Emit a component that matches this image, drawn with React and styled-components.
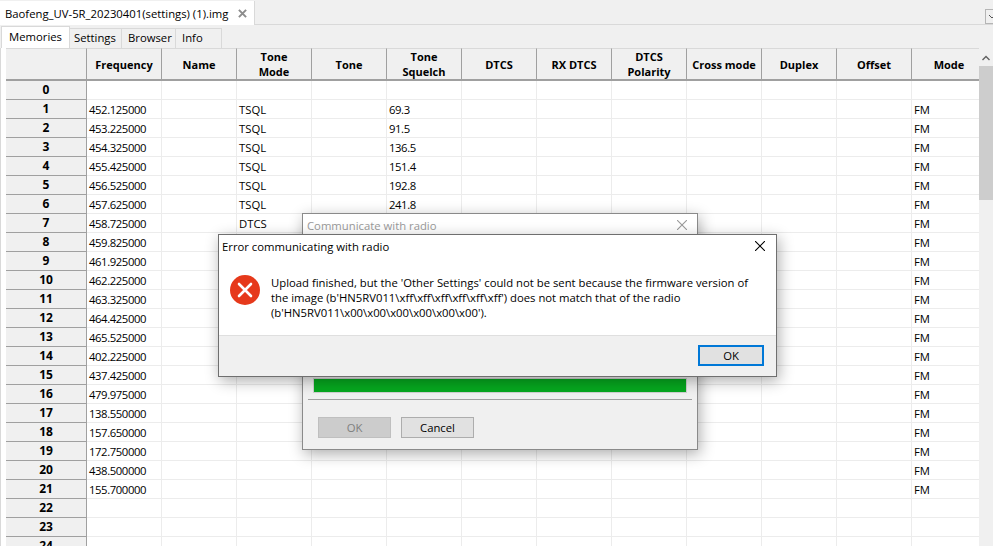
import React from 'react'
import styled, { createGlobalStyle } from 'styled-components'

const GlobalStyle = createGlobalStyle`
  html, body {
    margin: 0;
    padding: 0;
    width: 993px;
    height: 546px;
    overflow: hidden;
    background: #f0f0f0;
    font-family: "Open Sans", "Noto Sans", sans-serif;
    font-size: 11.3px;
    color: #000;
  }
`

const Page = styled.div`
  position: relative;
  width: 993px;
  height: 546px;
  overflow: hidden;
  background: #f0f0f0;
`
const DocBar = styled.div`
  display: flex;
  justify-content: space-between;
  height: 23px;
  padding-top: 1px;
  border-bottom: 1px solid #d9d9d9;
  box-sizing: content-box;
`
const DocTab = styled.div`
  display: flex;
  align-items: center;
  justify-content: space-between;
  width: 255px;
  height: 24px;
  box-sizing: border-box;
  padding: 0 7px 0 5px;
  white-space: nowrap;
  background: #fff;
  border-right: 1px solid #d9d9d9;
  z-index: 1;
`
const CloseTab = styled.svg`
  width: 9px;
  height: 9px;
  stroke: #8c8c8c;
  stroke-width: 2.2;
`
const ScrollTabs = styled.div`
  width: 7px;
  height: 13px;
  margin-top: 8px;
  border: 1px solid #b5b5b5;
  border-right: none;
  background: #f0f0f0;
  overflow: hidden;
`
const TabChevron = styled.svg`
  display: block;
  width: 7px;
  height: 13px;
  fill: none;
  stroke: #555;
`
const TabRow = styled.div`
  display: flex;
  height: 23px;
  padding: 1px 0 0 1px;
  box-sizing: border-box;
`
const Tab = styled.div`
  height: ${p => (p.$active ? '22px' : '20px')};
  margin-top: ${p => (p.$active ? '0' : '2px')};
  width: ${p => p.$w}px;
  box-sizing: border-box;
  padding-left: ${p => p.$pad}px;
  line-height: ${p => (p.$active ? '19px' : '18px')};
  background: ${p => (p.$active ? '#fff' : '#f0f0f0')};
  border: 1px solid #d9d9d9;
  border-left: ${p => (p.$active ? '1px solid #d9d9d9' : 'none')};
  border-bottom: none;
`
const Body = styled.div`
  display: flex;
  height: 500px;
  background: #fff;
  padding-left: 5px;
  border-left: 1px solid #d9d9d9;
  box-sizing: border-box;
`
const Grid = styled.div`
  width: 973px;
  flex: none;
  overflow: hidden;
`
const Row = styled.div`
  display: flex;
  height: ${p => p.$h || 19}px;
  box-sizing: border-box;
`
const Corner = styled.div`
  width: 81px;
  flex: none;
  box-sizing: border-box;
  background: #f0f0f0;
  border-right: 1px solid #a0a0a0;
  border-bottom: 2px solid #a0a0a0;
  border-top: 1px solid #d9d9d9;
`
const HeadCell = styled.div`
  width: 75px;
  flex: none;
  box-sizing: border-box;
  display: flex;
  align-items: center;
  justify-content: center;
  text-align: center;
  font-size: 11px;
  font-weight: 700;
  line-height: 15px;
  white-space: pre-line;
  background: #f0f0f0;
  border-right: 1px solid #a0a0a0;
  border-bottom: 2px solid #a0a0a0;
  border-top: 1px solid #d9d9d9;
`
const RowHead = styled.div`
  width: 81px;
  flex: none;
  box-sizing: border-box;
  background: #f0f0f0;
  border-right: 1px solid #a0a0a0;
  border-bottom: 1px solid #a0a0a0;
  text-align: center;
  font-size: 12px;
  font-weight: 700;
  line-height: 17px;
`
const Cell = styled.div`
  width: 75px;
  flex: none;
  box-sizing: border-box;
  padding-left: 2px;
  line-height: 19px;
  white-space: nowrap;
  letter-spacing: ${p => (p.$numeric ? '-0.4px' : '0')};
  background: #fff;
  border-right: 1px solid #ececec;
  border-bottom: 1px solid #ececec;
`
const ScrollBar = styled.div`
  width: 14px;
  flex: none;
  background: #f0f0f0;
  display: flex;
  flex-direction: column;
  align-items: center;
`
const ScrollArrow = styled.svg`
  width: 14px;
  height: 18px;
  flex: none;
  fill: none;
  stroke: #606060;
  stroke-width: 1.4;
`
const ScrollThumb = styled.div`
  width: 14px;
  height: 134px;
  background: #cdcdcd;
`
const Window = styled.div`
  position: absolute;
  left: ${p => p.$x}px;
  top: ${p => p.$y}px;
  width: ${p => p.$w}px;
  height: ${p => p.$h}px;
  box-sizing: border-box;
  background: ${p => p.$bg};
  border: 1px solid ${p => p.$line};
  box-shadow: 2px 4px 14px rgba(0, 0, 0, 0.32);
  display: flex;
  flex-direction: column;
`
const TitleBar = styled.div`
  display: flex;
  align-items: center;
  justify-content: space-between;
  height: 24px;
  flex: none;
  box-sizing: border-box;
  padding: 0 ${p => p.$right}px 2px ${p => p.$left}px;
  color: ${p => p.$color};
  background: #fff;
`
const CloseIcon = styled.svg`
  width: 10px;
  height: 10px;
  stroke: ${p => p.$color};
  stroke-width: 1.1;
`
const Message = styled.div`
  display: flex;
  height: 77px;
  flex: none;
  background: #fff;
  padding: 16px 0 0 11px;
  box-sizing: border-box;
  gap: 11px;
  border-bottom: 1px solid #dfdfdf;
`
const ErrorIcon = styled.svg`
  width: 30px;
  height: 30px;
  flex: none;
`
const MessageText = styled.div`
  width: 490px;
  line-height: 15px;
  white-space: nowrap;
  color: #000;
`
const Footer = styled.div`
  flex: 1;
  display: flex;
  justify-content: flex-end;
  align-items: flex-start;
  padding: 9px 12px 0 0;
`
const Button = styled.div`
  width: ${p => p.$w}px;
  height: 21px;
  box-sizing: border-box;
  display: flex;
  align-items: center;
  justify-content: center;
  background: ${p => (p.$disabled ? '#cccccc' : '#e1e1e1')};
  color: ${p => (p.$disabled ? '#7f7f7f' : '#000')};
  border: ${p => (p.$primary ? '2px solid #0078d7' : p.$disabled ? '1px solid #bfbfbf' : '1px solid #adadad')};
`
const Progress = styled.div`
  height: 15px;
  margin: 0 10px;
  background: #06a81f;
  border: 1px solid #d0d0d0;
  box-sizing: border-box;
`
const Divider = styled.div`
  height: 1px;
  margin: 6px 5px 0;
  background: #a0a0a0;
`
const DialogSpacer = styled.div`
  height: 140px;
  flex: none;
`
const ButtonRow = styled.div`
  display: flex;
  gap: 10px;
  padding: 17px 0 0 15px;
`

const COLUMNS = [
  'Frequency', 'Name', 'Tone\nMode', 'Tone', 'Tone\nSquelch', 'DTCS', 'RX DTCS',
  'DTCS\nPolarity', 'Cross mode', 'Duplex', 'Offset', 'Mode',
]

const FREQS = [
  '', '452.125000', '453.225000', '454.325000', '455.425000', '456.525000', '457.625000', '458.725000',
  '459.825000', '461.925000', '462.225000', '463.325000', '464.425000', '465.525000', '402.225000',
  '437.425000', '479.975000', '138.550000', '157.650000', '172.750000', '438.500000', '155.700000',
  '', '', '',
]

const TONES = { 1: '69.3', 2: '91.5', 3: '136.5', 4: '151.4', 5: '192.8', 6: '241.8' }

export default function App() {
  return (
    <Page>
      <GlobalStyle />
      <DocBar>
        <DocTab>
          Baofeng_UV-5R_20230401(settings) (1).img
          <CloseTab viewBox="0 0 10 10"><path d="M1 1l8 8M9 1l-8 8" /></CloseTab>
        </DocTab>
        <ScrollTabs>
          <TabChevron viewBox="0 0 7 13"><path d="M3 5l3 3 3-3" /></TabChevron>
        </ScrollTabs>
      </DocBar>
      <TabRow>
        <Tab $active $w={69} $pad={7}>Memories</Tab>
        <Tab $w={52} $pad={4}>Settings</Tab>
        <Tab $w={54} $pad={6}>Browser</Tab>
        <Tab $w={46} $pad={6}>Info</Tab>
      </TabRow>
      <Body>
        <Grid>
          <Row $h={33}>
            <Corner />
            {COLUMNS.map(name => <HeadCell key={name}>{name}</HeadCell>)}
          </Row>
          {FREQS.map((freq, i) => (
            <Row key={i}>
              <RowHead>{i}</RowHead>
              <Cell $numeric>{freq}</Cell>
              <Cell />
              <Cell>{i >= 1 && i <= 6 ? 'TSQL' : i === 7 ? 'DTCS' : ''}</Cell>
              <Cell />
              <Cell $numeric>{TONES[i]}</Cell>
              <Cell /><Cell /><Cell /><Cell /><Cell /><Cell />
              <Cell>{i >= 1 && i <= 21 ? 'FM' : ''}</Cell>
            </Row>
          ))}
        </Grid>
        <ScrollBar>
          <ScrollArrow viewBox="0 0 14 18"><path d="M3.5 12l3.5-3.5 3.5 3.5" /></ScrollArrow>
          <ScrollThumb />
        </ScrollBar>
      </Body>

      <Window $x={302} $y={213} $w={396} $h={237} $bg="#f0f0f0" $line="#8a8a8a">
        <TitleBar $left={4} $right={10} $color="#9a9a9a">
          Communicate with radio
          <CloseIcon $color="#9a9a9a" viewBox="0 0 10 10"><path d="M0 0l10 10M10 0L0 10" /></CloseIcon>
        </TitleBar>
        <DialogSpacer />
        <Progress />
        <Divider />
        <ButtonRow>
          <Button $w={73} $disabled>OK</Button>
          <Button $w={73}>Cancel</Button>
        </ButtonRow>
      </Window>

      <Window $x={218} $y={234} $w={559} $h={143} $bg="#f0f0f0" $line="#6f6f6f">
        <TitleBar $left={3} $right={11} $color="#000">
          Error communicating with radio
          <CloseIcon $color="#000" viewBox="0 0 10 10"><path d="M0 0l10 10M10 0L0 10" /></CloseIcon>
        </TitleBar>
        <Message>
          <ErrorIcon viewBox="0 0 30 30">
            <circle cx="15" cy="15" r="15" fill="#e6391b" />
            <path d="M9 9l12 12M21 9L9 21" stroke="#fff" strokeWidth="2.6" strokeLinecap="round" />
          </ErrorIcon>
          <MessageText>
            Upload finished, but the 'Other Settings' could not be sent because the firmware version of<br />
            the image (b'HN5RV011\xff\xff\xff\xff\xff\xff') does not match that of the radio<br />
            (b'HN5RV011\x00\x00\x00\x00\x00\x00').
          </MessageText>
        </Message>
        <Footer>
          <Button $w={66} $primary>OK</Button>
        </Footer>
      </Window>
    </Page>
  )
}
